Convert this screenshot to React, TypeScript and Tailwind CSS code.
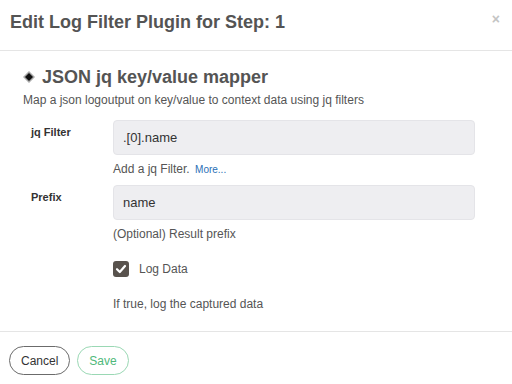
export default function App() {
  return (
    <div className="w-[512px] h-[384px] bg-white text-[#555] font-['Liberation_Sans',Arial,sans-serif] overflow-hidden">
      <div className="h-[51px] border-b border-[#e5e5e5] flex items-start justify-between pl-[10px] pr-[12px] pt-[11px]">
        <h4 className="text-[18px] leading-[22px] font-bold text-[#545454]">Edit Log Filter Plugin for Step: 1</h4>
        <span className="text-[#c4c4c4] text-[14px] font-bold leading-[14px] mt-[1px]">×</span>
      </div>

      <div className="pl-[23px] pr-[37px] pt-[15px] h-[281px] border-b border-[#e5e5e5]">
        <div className="flex items-center gap-[7px] h-[22px]">
          <svg width="12" height="12" viewBox="0 0 12 12" className="shrink-0">
            <path d="M6 0 L12 6 L6 12 L0 6 Z" fill="#aaa" />
            <path d="M6 2 L10 6 L6 10 L2 6 Z" fill="#111" />
          </svg>
          <h3 className="text-[18px] font-bold leading-[22px] text-[#545454]">JSON jq key/value mapper</h3>
        </div>
        <p className="text-[12px] leading-[16px] mt-[4px]">Map a json logoutput on key/value to context data using jq filters</p>

        <div className="flex mt-[12px]">
          <label className="w-[90px] shrink-0 pl-[8px] pt-[4px] text-[11px] font-bold text-[#333]">jq Filter</label>
          <div className="flex-1">
            <div className="h-[35px] rounded-[4px] bg-[#eeeef1] border border-[#e4e4e8] flex items-center px-[9px] text-[13px] text-[#333]">.[0].name</div>
            <p className="mt-[6px] text-[12px] leading-[16px]">
              Add a jq Filter. <a className="ml-[2px] text-[10px] text-[#2a6fb6]">More...</a>
            </p>
          </div>
        </div>

        <div className="flex mt-[7px]">
          <label className="w-[90px] shrink-0 pl-[8px] pt-[4px] text-[11px] font-bold text-[#333]">Prefix</label>
          <div className="flex-1">
            <div className="h-[35px] rounded-[4px] bg-[#eeeef1] border border-[#e4e4e8] flex items-center px-[9px] text-[13px] text-[#333]">name</div>
            <p className="mt-[6px] text-[12px] leading-[16px]">(Optional) Result prefix</p>
          </div>
        </div>

        <div className="ml-[90px] mt-[18px] flex items-center gap-[10px]">
          <span className="w-[16px] h-[16px] rounded-[3px] bg-[#58524d] flex items-center justify-center">
            <svg width="12" height="12" viewBox="0 0 12 12">
              <path d="M2 6.2 L4.8 9 L10 3" fill="none" stroke="white" strokeWidth="2.2" strokeLinecap="round" strokeLinejoin="round" />
            </svg>
          </span>
          <span className="text-[12px]">Log Data</span>
        </div>
        <p className="ml-[90px] mt-[18px] text-[12px] leading-[16px]">If true, log the captured data</p>
      </div>

      <div className="flex gap-[7px] pl-[9px] pt-[14px]">
        <button className="h-[29px] px-[11px] rounded-full border border-[#6b6b6b] text-[12px] text-[#333]">Cancel</button>
        <button className="h-[29px] px-[11px] rounded-full border border-[#9ad8b4] text-[12px] text-[#4fb97a]">Save</button>
      </div>
    </div>
  );
}
